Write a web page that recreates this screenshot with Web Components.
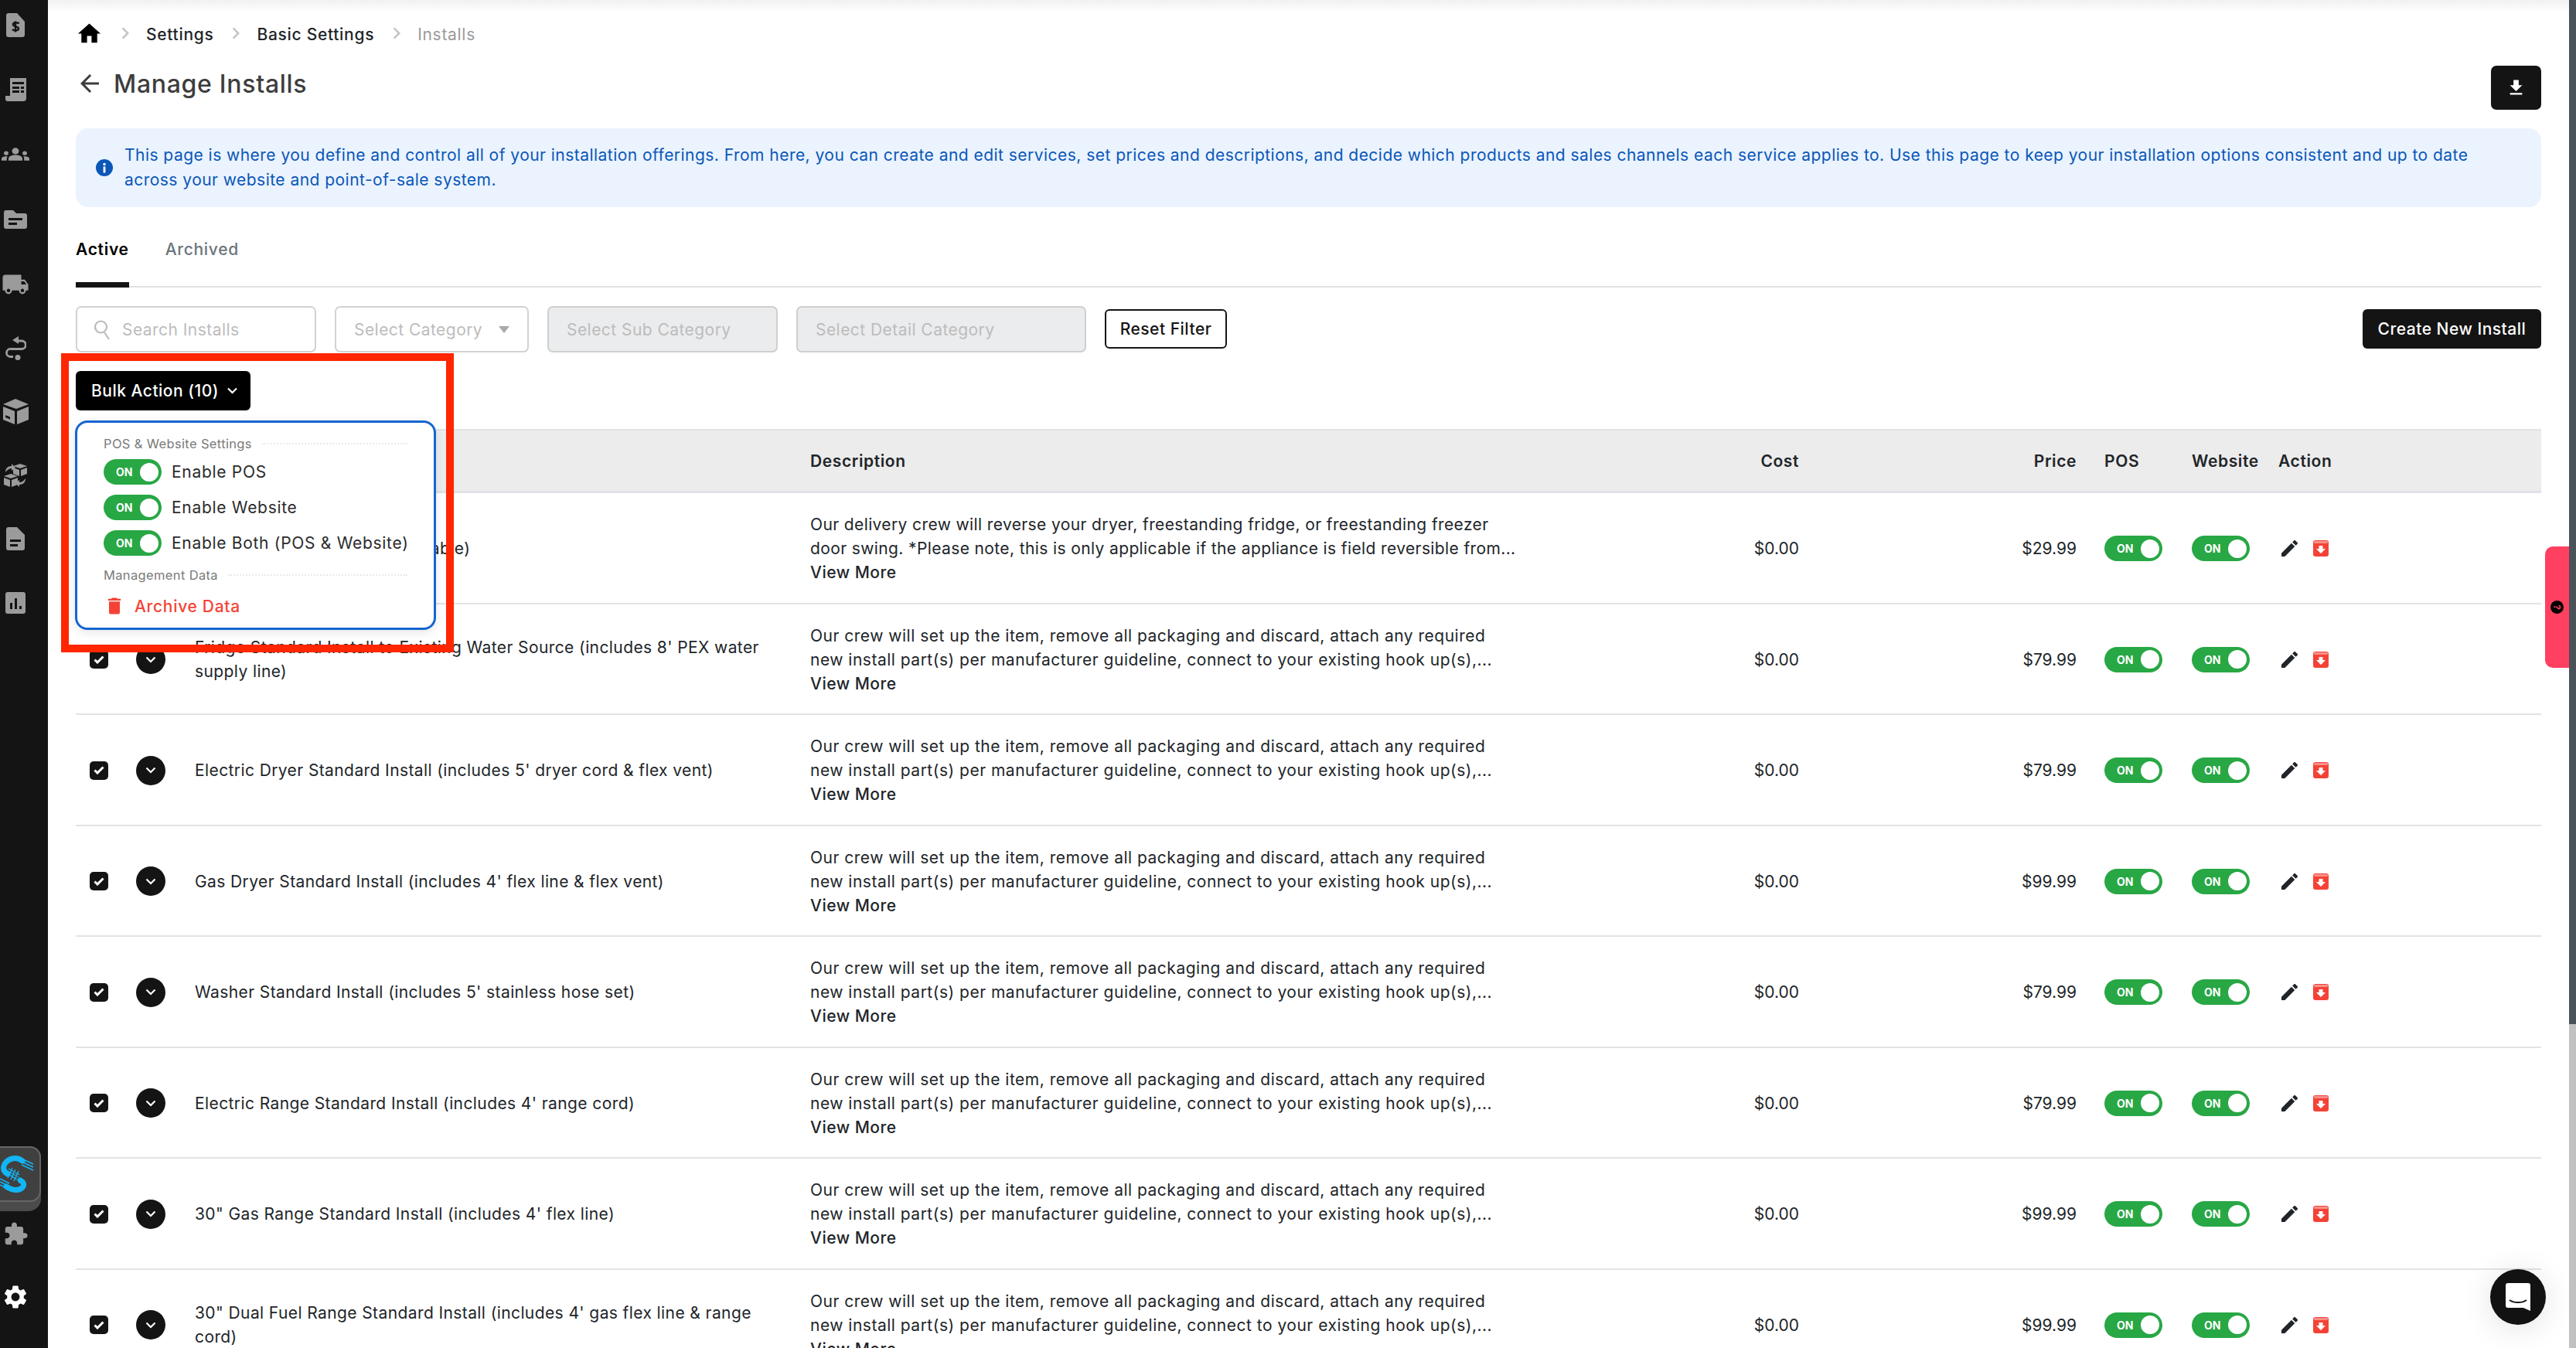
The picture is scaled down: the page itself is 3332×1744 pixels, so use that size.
<!DOCTYPE html>
<html lang="en">
<head>
<meta charset="utf-8">
<title>Manage Installs</title>
<style>
	html, body { margin: 0; height: 100%; overflow: hidden; background: #fff; }
	body { font-family: Inter, "Liberation Sans", sans-serif; color: #212529; }
</style>
</head>
<body>
<install-app></install-app>

<script>
// Iconos compartidos (svg en linea, sin archivos externos)
const ICONS = {
	home: '<path d="M10 20v-6h4v6h5v-8h3L12 3 2 12h3v8z"/>',
	chevron: '<path d="M10 6L8.59 7.41 13.17 12l-4.58 4.59L10 18l6-6z"/>',
	back: '<path d="M20 11H7.83l5.59-5.59L12 4l-8 8 8 8 1.41-1.41L7.83 13H20v-2z"/>',
	download: '<path d="M19 9h-4V3H9v6H5l7 7 7-7zM5 18v2h14v-2H5z"/>',
	edit: '<path d="M3 17.25V21h3.75L17.81 9.94l-3.75-3.75L3 17.25zM20.71 7.04c.39-.39.39-1.02 0-1.41l-2.34-2.34c-.39-.39-1.02-.39-1.41 0l-1.83 1.83 3.75 3.75 1.83-1.83z"/>',
	trash: '<path d="M6 19c0 1.1.9 2 2 2h8c1.1 0 2-.9 2-2V7H6v12zM19 4h-3.5l-1-1h-5l-1 1H5v2h14V4z"/>',
	groups: '<path d="M12 12.75c1.63 0 3.07.39 4.24.9 1.08.48 1.76 1.56 1.76 2.73V18H6v-1.61c0-1.18.68-2.26 1.76-2.73 1.17-.52 2.61-.91 4.24-.91zM4 13c1.1 0 2-.9 2-2s-.9-2-2-2-2 .9-2 2 .9 2 2 2zm1.13 1.1c-.37-.06-.74-.1-1.13-.1-.99 0-1.93.21-2.78.58C.48 14.9 0 15.62 0 16.43V18h4.5v-1.61c0-.83.23-1.61.63-2.29zM20 13c1.1 0 2-.9 2-2s-.9-2-2-2-2 .9-2 2 .9 2 2 2zm4 3.43c0-.81-.48-1.53-1.22-1.85-.85-.37-1.79-.58-2.78-.58-.39 0-.76.04-1.13.1.4.68.63 1.46.63 2.29V18H24v-1.57zM12 6c1.66 0 3 1.34 3 3s-1.34 3-3 3-3-1.34-3-3 1.34-3 3-3z"/>',
	truck: '<path d="M20 8h-3V4H3c-1.1 0-2 .9-2 2v11h2c0 1.66 1.34 3 3 3s3-1.34 3-3h6c0 1.66 1.34 3 3 3s3-1.34 3-3h2v-5l-3-4zM6 18.5c-.83 0-1.5-.67-1.5-1.5s.67-1.5 1.5-1.5 1.5.67 1.5 1.5-.67 1.5-1.5 1.5zm13.5-9l1.96 2.5H17V9.5h2.5zm-1.5 9c-.83 0-1.5-.67-1.5-1.5s.67-1.5 1.5-1.5 1.5.67 1.5 1.5-.67 1.5-1.5 1.5z"/>',
	puzzle: '<path d="M20.5 11H19V7c0-1.1-.9-2-2-2h-4V3.5C13 2.12 11.88 1 10.5 1S8 2.12 8 3.5V5H4c-1.1 0-1.99.9-1.99 2v3.8H3.5c1.49 0 2.7 1.21 2.7 2.7s-1.21 2.7-2.7 2.7H2V20c0 1.1.9 2 2 2h3.8v-1.5c0-1.49 1.21-2.7 2.7-2.7 1.49 0 2.7 1.21 2.7 2.7V22H17c1.1 0 2-.9 2-2v-4h1.5c1.38 0 2.5-1.12 2.5-2.5S21.88 11 20.5 11z"/>',
	gear: '<path d="M19.14 12.94c.04-.3.06-.61.06-.94 0-.32-.02-.64-.07-.94l2.03-1.58c.18-.14.23-.41.12-.61l-1.92-3.32c-.12-.22-.37-.29-.59-.22l-2.39.96c-.5-.38-1.03-.7-1.62-.94l-.36-2.54c-.04-.24-.24-.41-.48-.41h-3.84c-.24 0-.43.17-.47.41l-.36 2.54c-.59.24-1.13.57-1.62.94l-2.39-.96c-.22-.08-.47 0-.59.22L2.74 8.87c-.12.21-.08.47.12.61l2.03 1.58c-.05.3-.09.63-.09.94s.02.64.07.94l-2.03 1.58c-.18.14-.23.41-.12.61l1.92 3.32c.12.22.37.29.59.22l2.39-.96c.5.38 1.03.7 1.62.94l.36 2.54c.05.24.24.41.48.41h3.84c.24 0 .44-.17.47-.41l.36-2.54c.59-.24 1.13-.56 1.62-.94l2.39.96c.22.08.47 0 .59-.22l1.92-3.32c.12-.22.07-.47-.12-.61l-2.01-1.58zM12 15.6c-1.98 0-3.6-1.62-3.6-3.6s1.62-3.6 3.6-3.6 3.6 1.62 3.6 3.6-1.62 3.6-3.6 3.6z"/>'
};

function icono(nombre, tam, box = '0 0 24 24') {
	return `<svg width="${tam}" height="${tam}" viewBox="${box}" fill="currentColor">${ICONS[nombre]}</svg>`;
}

// Iconos del riel lateral: ancho, alto del renglon, alto, viewBox y contenido
const RAIL_ITEMS = [
	[24, 84, 31, '0 0 24 31', '<path fill-rule="evenodd" d="M3 0h11l10 11v17a3 3 0 0 1-3 3H3a3 3 0 0 1-3-3V3a3 3 0 0 1 3-3z"/><path d="M16.5 13.5c-1-1.6-7.5-2-7.5 1.2 0 3.4 7 1.8 7 5.3 0 3.2-6.6 2.8-8 1M12 10.500v14" fill="none" stroke="#141414" stroke-width="2.400"/>'],
	[27, 83, 30, '0 0 27 30', '<path fill-rule="evenodd" d="M6 0h21v26a4 4 0 0 1-4 4H3a3 3 0 0 1-3-3v-4h6zM9 5v3h15V5zm0 6v3h9v-3zm11 0v3h4v-3zM9 16v3h9v-3zm11 0v3h4v-3z"/><path d="M2 25h17v2a3 3 0 0 0 1 3H3a3 3 0 0 1-1-3z"/>'],
	[36, 85, 19, '0 5 24 14', ICONS.groups],
	[30, 84, 24, '0 0 30 24', '<path fill-rule="evenodd" d="M3 0h9l4 4h11a3 3 0 0 1 3 3v14a3 3 0 0 1-3 3H3a3 3 0 0 1-3-3V3a3 3 0 0 1 3-3zM6 10v3h18v-3zm0 6v3h11v-3z"/>'],
	[36, 83, 28, '0 3 24 18', ICONS.truck],
	[27, 83, 31, '0 0 27 31', '<path d="M9 5l8-5v10z"/><circle cx="16" cy="27.500" r="3.500"/><path d="M16 6h5a5 5 0 0 1 0 10.500H7a4.500 4.500 0 0 0-1 10h4" fill="none" stroke="currentColor" stroke-width="2.800"/>'],
	[33, 81, 33, '0 0 33 33', '<path d="M16 0l17 7-16 6L0 7z"/><path fill-rule="evenodd" d="M0 10l15 6v17L0 27zM3 21v3l6 2.500v-3z"/><path d="M18 16l15-6v17l-15 6z"/>'],
	[30, 83, 33, '0 0 30 33', '<path d="M21 2l9 3-9 3-9-3z"/><path d="M12 7l8 3v8l-8-3zM22 10l8-3v8l-8 3z"/><path d="M9 15l9 3-9 3-9-3z"/><path d="M0 20l8 3v9l-8-3zM10 23l8-3v9l-8 3z"/><path d="M2 13c0-5 3-8 8-8V2l5 5-5 4V8c-3 0-6 2-8 5zM28 21c0 5-3 8-8 8v3l-5-5 5-4v3c3 0 6-2 8-5z"/>'],
	[24, 81, 30, '0 0 24 30', '<path fill-rule="evenodd" d="M3 0h11l10 10v17a3 3 0 0 1-3 3H3a3 3 0 0 1-3-3V3a3 3 0 0 1 3-3zM5 16v3h14v-3zm0 6v3h10v-3z"/>'],
	[26, 86, 28, '0 0 26 28', '<path fill-rule="evenodd" d="M3 0h20a3 3 0 0 1 3 3v22a3 3 0 0 1-3 3H3a3 3 0 0 1-3-3V3a3 3 0 0 1 3-3zM6 14v8h3v-8zm6-6v14h3V8zm6 10v4h3v-4z"/>']
];

class SideRail extends HTMLElement {
	constructor() {
		super();
		this.attachShadow({ mode: 'open' });
		const items = RAIL_ITEMS.map(([w, fila, h, box, d]) =>
			`<div class="item" style="height:${fila}px"><svg width="${w}" height="${h}" viewBox="${box}" fill="currentColor" preserveAspectRatio="none">${d}</svg></div>`).join('');
		this.shadowRoot.innerHTML = `
			<style>
				:host {
					display: flex;
					flex-direction: column;
					flex: none;
					width: 62px;
					height: 100%;
					background: #141414;
					color: #9b9b9b;
					overflow: hidden;
				}
				.lista { margin-top: -10px; }
				.item {
					display: flex;
					align-items: center;
					justify-content: center;
					width: 40px;
					height: 83px;
				}
				.abajo { margin-top: auto; padding-bottom: 13px; }
				.tile {
					box-sizing: border-box;
					width: 53px;
					height: 84px;
					border-radius: 0 16px 16px 0;
					background: #4b4b4b;
					padding-bottom: 12px;
				}
				.cara {
					box-sizing: border-box;
					height: 100%;
					border: solid #666;
					border-width: 2px 2px 2px 0;
					border-radius: 0 14px 14px 0;
					background: #404040;
				}
				.cara svg { display: block; }
				.puzzle { height: 58px; }
				.gear { height: 106px; color: #fff; }
			</style>
			<div class="lista">${items}</div>
			<div class="abajo">
				<div class="tile"><div class="cara">
					<svg width="51" height="68" viewBox="0 2 51 68" fill="none" stroke="#12b5f5">
						<path d="M29 19C22 13 11 15 6 23c-3 6-1 10 4 13M26 44c6 3 6 8 1 11-6 3-13 1-19-3" stroke-width="7" stroke-linecap="round"/>
						<path d="M28 24l15 7M30 21l13 6M32 18l11 5M0 42l12 6M0 46l10 5M0 50l8 4M11 29l14 8M10 32l14 8M9 35l13 8M16 28l-6 13M20 30l-6 13M24 32l-6 13" stroke-width="1.400"/>
					</svg>
				</div></div>
				<div class="item puzzle">${icono('puzzle', 33)}</div>
				<div class="item gear">${icono('gear', 36)}</div>
			</div>
		`;
	}
}
customElements.define('side-rail', SideRail);

class CrumbBar extends HTMLElement {
	constructor() {
		super();
		this.attachShadow({ mode: 'open' });
		this.shadowRoot.innerHTML = `
			<style>
				:host {
					display: flex;
					align-items: center;
					height: 40px;
					font-size: 21px;
					font-weight: 500;
					letter-spacing: 0.7px;
					color: #212529;
				}
				.casa { display: flex; color: #000; margin-top: -2px; }
				.sep { display: flex; color: #c4c4c4; margin: -2px 12.500px 0 13.500px; }
				.fin { color: #9a9a9a; font-weight: 400; }
			</style>
			<span class="casa">${icono('home', 35)}</span>
			<span class="sep">${icono('chevron', 30)}</span>
			<span>Settings</span>
			<span class="sep">${icono('chevron', 30)}</span>
			<span>Basic Settings</span>
			<span class="sep">${icono('chevron', 30)}</span>
			<span class="fin">Installs</span>
		`;
	}
}
customElements.define('crumb-bar', CrumbBar);

class PageTitle extends HTMLElement {
	constructor() {
		super();
		this.attachShadow({ mode: 'open' });
		this.shadowRoot.innerHTML = `
			<style>
				:host {
					display: flex;
					justify-content: space-between;
					align-items: flex-start;
					height: 57px;
					margin-top: 21px;
				}
				.titulo {
					display: flex;
					align-items: center;
					gap: 13px;
					height: 46px;
					font-size: 32px;
					font-weight: 500;
					letter-spacing: 0.7px;
					color: #3d3d3d;
				}
				.titulo svg { display: block; }
				button {
					display: flex;
					align-items: center;
					justify-content: center;
					width: 65px;
					height: 57px;
					border: 0;
					border-radius: 7px;
					background: #141414;
					color: #fff;
				}
			</style>
			<div class="titulo">${icono('back', 36)}<span>Manage Installs</span></div>
			<button>${icono('download', 27)}</button>
		`;
	}
}
customElements.define('page-title', PageTitle);

class InfoBanner extends HTMLElement {
	constructor() {
		super();
		this.attachShadow({ mode: 'open' });
		this.shadowRoot.innerHTML = `
			<style>
				:host {
					display: flex;
					align-items: center;
					gap: 15px;
					box-sizing: border-box;
					height: 102px;
					margin-top: 24px;
					padding: 0 40px 0 26px;
					border-radius: 16px;
					background: #eaf3fe;
					color: #0b57b8;
					font-size: 21px;
					letter-spacing: 0.465px;
					line-height: 32px;
				}
				svg { flex: none; display: block; }
			</style>
			<svg width="22" height="22" viewBox="0 0 22 22">
				<circle cx="11" cy="11" r="11" fill="#0b57b8"/>
				<circle cx="11" cy="6.500" r="1.700" fill="#fff"/>
				<rect x="9.600" y="9.500" width="2.800" height="8" fill="#fff"/>
			</svg>
			<div><slot></slot></div>
		`;
	}
}
customElements.define('info-banner', InfoBanner);

class TabStrip extends HTMLElement {
	constructor() {
		super();
		this.attachShadow({ mode: 'open' });
		this.shadowRoot.innerHTML = `
			<style>
				:host {
					display: flex;
					gap: 47px;
					margin-top: 31px;
					border-bottom: 2px solid #e2e2e2;
					font-size: 21px;
					letter-spacing: 0.7px;
					font-weight: 500;
					color: #6c757d;
				}
				div {
					height: 48px;
					line-height: 48px;
					padding-bottom: 18px;
				}
				.on {
					margin-bottom: -2px;
					border-bottom: 7px solid #141414;
					color: #000;
					font-weight: 600;
				}
			</style>
			<div class="on">Active</div>
			<div>Archived</div>
		`;
	}
}
customElements.define('tab-strip', TabStrip);

class FilterBar extends HTMLElement {
	constructor() {
		super();
		this.attachShadow({ mode: 'open' });
		this.shadowRoot.innerHTML = `
			<style>
				:host {
					display: flex;
					align-items: flex-start;
					gap: 24px;
					margin-top: 24px;
					font-size: 21px;
					letter-spacing: 0.45px;
					color: #bcbcbc;
				}
				.campo {
					display: flex;
					align-items: center;
					flex: none;
					box-sizing: border-box;
					height: 60px;
					padding: 0 23px;
					border: 2px solid #d2d2d2;
					border-radius: 7px;
				}
				.off { background: #ebecee; border-color: #cfcfcf; }
				.campo svg { flex: none; display: block; }
				.flecha {
					width: 0;
					height: 0;
					margin-left: auto;
					border: 7px solid transparent;
					border-top: 9px solid #a9a9a9;
					border-bottom: 0;
				}
				button {
					box-sizing: border-box;
					height: 51px;
					margin-top: 4px;
					padding: 0;
					border-radius: 6px;
					font: 500 21px Inter, "Liberation Sans", sans-serif;
					letter-spacing: 0.5px;
				}
				.reset { width: 158px; background: #fff; border: 2px solid #141414; color: #141414; }
				.crear { width: 231px; margin-left: auto; background: #141414; border: 0; color: #fff; }
			</style>
			<div class="campo" style="width:311px">
				<svg width="20" height="27" viewBox="0 0 20 27" fill="none" stroke="#bcbcbc" stroke-width="2.200" style="margin-right:16px;margin-left:-1px"><circle cx="8.500" cy="10" r="7.500"/><path d="M13 17l6 9"/></svg>
				<span>Search Installs</span>
			</div>
			<div class="campo" style="width:251px;padding-right:23px"><span>Select Category</span><i class="flecha"></i></div>
			<div class="campo off" style="width:298px"><span>Select Sub Category</span></div>
			<div class="campo off" style="width:375px"><span>Select Detail Category</span></div>
			<button class="reset">Reset Filter</button>
			<button class="crear">Create New Install</button>
		`;
	}
}
customElements.define('filter-bar', FilterBar);

class OnSwitch extends HTMLElement {
	constructor() {
		super();
		this.attachShadow({ mode: 'open' });
		this.shadowRoot.innerHTML = `
			<style>
				:host {
					display: inline-flex;
					align-items: center;
					flex: none;
					box-sizing: border-box;
					width: 75px;
					height: 33px;
					padding: 0 4px 0 16px;
					border-radius: 17px;
					background: #28a745;
					color: #fff;
					font-size: 14px;
					font-weight: 700;
					letter-spacing: 0;
				}
				i {
					width: 24px;
					height: 24px;
					margin-left: auto;
					border-radius: 50%;
					background: #fff;
				}
			</style>
			<span>ON</span><i></i>
		`;
	}
}
customElements.define('on-switch', OnSwitch);

class BulkMenu extends HTMLElement {
	constructor() {
		super();
		this.attachShadow({ mode: 'open' });
		this.shadowRoot.innerHTML = `
			<style>
				:host {
					display: block;
					position: absolute;
					left: -1px;
					top: 64px;
					box-sizing: border-box;
					width: 467px;
					height: 271px;
					padding: 16px 34px 0 34px;
					border: 3px solid #1565d0;
					border-radius: 16px;
					background: #fff;
					box-shadow: 0 3px 14px rgba(0,0,0,.1);
					font-size: 21px;
					letter-spacing: 0.7px;
					z-index: 2;
				}
				.grupo {
					display: flex;
					align-items: center;
					gap: 13px;
					height: 22px;
					font-size: 16.500px;
					letter-spacing: 0.35px;
					color: #7a7a7a;
				}
				.grupo::after {
					content: "";
					flex: 1;
					border-top: 2px dotted #eaeaea;
				}
				.opc {
					display: flex;
					align-items: center;
					gap: 13px;
					height: 33px;
					margin-top: 13px;
					white-space: nowrap;
					color: #2b2b2b;
				}
				.grupo + .opc { margin-top: 9px; }
				.grupo.dos { margin-top: 14px; }
				.arch {
					display: flex;
					align-items: center;
					gap: 12px;
					margin: 15px 0 0 0;
					color: #f44336;
					font-weight: 500;
				}
				.arch svg { display: block; }
			</style>
			<div class="grupo">POS &amp; Website Settings</div>
			<div class="opc"><on-switch></on-switch>Enable POS</div>
			<div class="opc"><on-switch></on-switch>Enable Website</div>
			<div class="opc"><on-switch></on-switch>Enable Both (POS &amp; Website)</div>
			<div class="grupo dos">Management Data</div>
			<div class="arch">${icono('trash', 28)}<span>Archive Data</span></div>
		`;
	}
}
customElements.define('bulk-menu', BulkMenu);

// Marco rojo de anotacion sobre el menu
class RedFrame extends HTMLElement {
	constructor() {
		super();
		this.attachShadow({ mode: 'open' });
		this.shadowRoot.innerHTML = `
			<style>
				:host {
					display: block;
					position: absolute;
					left: -19px;
					top: -23px;
					box-sizing: border-box;
					width: 508px;
					height: 387px;
					border: 10px solid #ff2600;
					z-index: 3;
					pointer-events: none;
				}
			</style>
		`;
	}
}
customElements.define('red-frame', RedFrame);

const COLUMNAS = '78px 76px 796px 930px 349px 359px 36px 113px 112px 1fr';

class InstallTable extends HTMLElement {
	constructor() {
		super();
		this.attachShadow({ mode: 'open' });
		this.shadowRoot.innerHTML = `
			<style>
				:host { display: block; margin-top: 24px; }
				.head {
					display: grid;
					grid-template-columns: ${COLUMNAS};
					align-items: center;
					box-sizing: border-box;
					height: 83px;
					background: #ececec;
					border-top: 2px solid #e3e3e3;
					border-bottom: 3px solid #dee2e6;
					font-size: 21px;
					letter-spacing: 0.6px;
					font-weight: 600;
					color: #212529;
				}
				.der { text-align: right; }
			</style>
			<div class="head">
				<span></span><span></span><span></span>
				<span>Description</span>
				<span class="der">Cost</span>
				<span class="der">Price</span>
				<span></span>
				<span>POS</span>
				<span>Website</span>
				<span>Action</span>
			</div>
			<slot></slot>
		`;
	}
}
customElements.define('install-table', InstallTable);

class InstallRow extends HTMLElement {
	constructor() {
		super();
		this.attachShadow({ mode: 'open' });
		const nombre = this.getAttribute('name');
		const precio = this.getAttribute('price');
		const d1 = this.getAttribute('line1') || 'Our crew will set up the item, remove all packaging and discard, attach any required';
		const d2 = this.getAttribute('line2') || 'new install part(s) per manufacturer guideline, connect to your existing hook up(s),...';
		const espacio = this.getAttribute('line1') ? '0.38px' : '0.5px';
		this.shadowRoot.innerHTML = `
			<style>
				:host {
					display: grid;
					grid-template-columns: ${COLUMNAS};
					align-items: center;
					box-sizing: border-box;
					height: 143.500px;
					padding-top: 2px;
					border-bottom: 2px solid #e2e3e6;
					font-size: 21px;
					letter-spacing: 0.4px;
					color: #212529;
				}
				.chk {
					display: flex;
					align-items: center;
					justify-content: center;
					box-sizing: border-box;
					width: 24px;
					height: 24px;
					margin-left: 18px;
					border-radius: 5px;
					background: #141414;
				}
				.exp {
					display: flex;
					align-items: center;
					justify-content: center;
					width: 38px;
					height: 38px;
					border-radius: 50%;
					background: #141414;
				}
				.nom { line-height: 31px; padding-right: 40px; }
				.desc { line-height: 31px; white-space: nowrap; letter-spacing: ${espacio}; }
				.mas { font-weight: 500; letter-spacing: 0.5px; }
				.der { text-align: right; letter-spacing: 0; }
				.acc { display: flex; align-items: center; gap: 20px; padding-left: 4px; }
				.acc svg { display: block; }
			</style>
			<div class="chk"><svg width="14" height="11" viewBox="0 0 14 11" fill="none" stroke="#fff" stroke-width="3"><path d="M1.500 5.500l3.500 3.500 7.500-7.500"/></svg></div>
			<div class="exp"><svg width="14" height="9" viewBox="0 0 14 9" fill="none" stroke="#fff" stroke-width="2.200"><path d="M1.500 1.500l5.500 5.500 5.500-5.500"/></svg></div>
			<div class="nom">${nombre}</div>
			<div class="desc">${d1}<br>${d2}<br><span class="mas">View More</span></div>
			<div class="der">$0.00</div>
			<div class="der">${precio}</div>
			<span></span>
			<div><on-switch></on-switch></div>
			<div><on-switch></on-switch></div>
			<div class="acc">
				<svg width="21" height="21" viewBox="3 3 18 18" fill="#212529">${ICONS.edit}</svg>
				<svg width="20" height="21" viewBox="0 0 20 21">
					<rect width="20" height="21" rx="3" fill="#f44336"/>
					<rect x="1" y="1" width="18" height="3" rx="1" fill="#f98f88"/>
					<path d="M7.500 7h5v4H16l-6 6-6-6h3.500z" fill="#fff"/>
				</svg>
			</div>
		`;
	}
}
customElements.define('install-row', InstallRow);

class ChatBubble extends HTMLElement {
	constructor() {
		super();
		this.attachShadow({ mode: 'open' });
		this.shadowRoot.innerHTML = `
			<style>
				:host {
					display: flex;
					align-items: center;
					justify-content: center;
					position: absolute;
					right: 30px;
					bottom: 30px;
					width: 72px;
					height: 72px;
					border-radius: 50%;
					background: #121212;
					box-shadow: 0 4px 40px rgba(0,0,0,.12);
					z-index: 4;
				}
				svg { display: block; }
			</style>
			<svg width="32" height="36" viewBox="0 0 32 36">
				<path d="M3 0h26a3 3 0 0 1 3 3v33l-9-4H3a3 3 0 0 1-3-3V3a3 3 0 0 1 3-3z" fill="#fff"/>
				<path d="M5 22c6 4 16 4 22 0" fill="none" stroke="#121212" stroke-width="2"/>
			</svg>
		`;
	}
}
customElements.define('chat-bubble', ChatBubble);

class HelpTab extends HTMLElement {
	constructor() {
		super();
		this.attachShadow({ mode: 'open' });
		this.shadowRoot.innerHTML = `
			<style>
				:host {
					display: flex;
					align-items: center;
					justify-content: center;
					position: absolute;
					right: 0;
					top: 707px;
					width: 31px;
					height: 157px;
					border-radius: 10px 0 0 10px;
					background: #ff4060;
					z-index: 4;
				}
				span {
					display: block;
					width: 17px;
					height: 17px;
					border-radius: 50%;
					background: #000;
					color: #ff4060;
					font: 700 12px/17px Inter, sans-serif;
					text-align: center;
					transform: rotate(90deg);
				}
			</style>
			<span>?</span>
		`;
	}
}
customElements.define('help-tab', HelpTab);

class InstallApp extends HTMLElement {
	constructor() {
		super();
		this.attachShadow({ mode: 'open' });
		this.shadowRoot.innerHTML = `
			<style>
				:host {
					display: flex;
					position: relative;
					width: 3332px;
					height: 1744px;
					overflow: hidden;
					background: #fff;
				}
				main {
					flex: 1;
					min-width: 0;
					box-sizing: border-box;
					padding: 24px 36px 0;
					position: relative;
				}
				main::before {
					content: "";
					position: absolute;
					left: 0;
					right: 0;
					top: 0;
					height: 16px;
					background: linear-gradient(#f1f1f1, #fff);
				}
				.barra {
					flex: none;
					width: 9px;
					background: #c1c1c1;
				}
				.barra div { height: 1325px; background: #4b5259; }
				.accion { position: relative; margin-top: 24px; height: 51px; }
				.bulk {
					display: flex;
					align-items: center;
					gap: 11px;
					box-sizing: border-box;
					width: 226px;
					height: 51px;
					padding: 0 0 0 20px;
					border: 0;
					border-radius: 6px;
					background: #000;
					color: #fff;
					font: 500 21px Inter, "Liberation Sans", sans-serif;
					letter-spacing: 0.5px;
				}
			</style>
			<side-rail></side-rail>
			<main>
				<crumb-bar></crumb-bar>
				<page-title></page-title>
				<info-banner>This page is where you define and control all of your installation offerings. From here, you can create and edit services, set prices and descriptions, and decide which products and sales channels each service applies to. Use this page to keep your installation options consistent and up to date<br>across your website and point-of-sale system.</info-banner>
				<tab-strip></tab-strip>
				<filter-bar></filter-bar>
				<div class="accion">
					<button class="bulk">Bulk Action (10)<svg width="13" height="9" viewBox="0 0 13 9" fill="none" stroke="#fff" stroke-width="2.200"><path d="M1 1.500l5.500 5.500L12 1.500"/></svg></button>
					<bulk-menu></bulk-menu>
					<red-frame></red-frame>
				</div>
				<install-table>
					<install-row name="Reverse Door Swing (if applicable)" price="$29.99"
						line1="Our delivery crew will reverse your dryer, freestanding fridge, or freestanding freezer"
						line2="door swing. *Please note, this is only applicable if the appliance is field reversible from..."></install-row>
					<install-row name="Fridge Standard Install to Existing Water Source (includes 8' PEX water supply line)" price="$79.99"></install-row>
					<install-row name="Electric Dryer Standard Install (includes 5' dryer cord &amp; flex vent)" price="$79.99"></install-row>
					<install-row name="Gas Dryer Standard Install (includes 4' flex line &amp; flex vent)" price="$99.99"></install-row>
					<install-row name="Washer Standard Install (includes 5' stainless hose set)" price="$79.99"></install-row>
					<install-row name="Electric Range Standard Install (includes 4' range cord)" price="$79.99"></install-row>
					<install-row name="30&quot; Gas Range Standard Install (includes 4' flex line)" price="$99.99"></install-row>
					<install-row name="30&quot; Dual Fuel Range Standard Install (includes 4' gas flex line &amp; range cord)" price="$99.99"></install-row>
				</install-table>
				<help-tab></help-tab>
				<chat-bubble></chat-bubble>
			</main>
			<div class="barra"><div></div></div>
		`;
	}
}
customElements.define('install-app', InstallApp);
</script>
</body>
</html>
